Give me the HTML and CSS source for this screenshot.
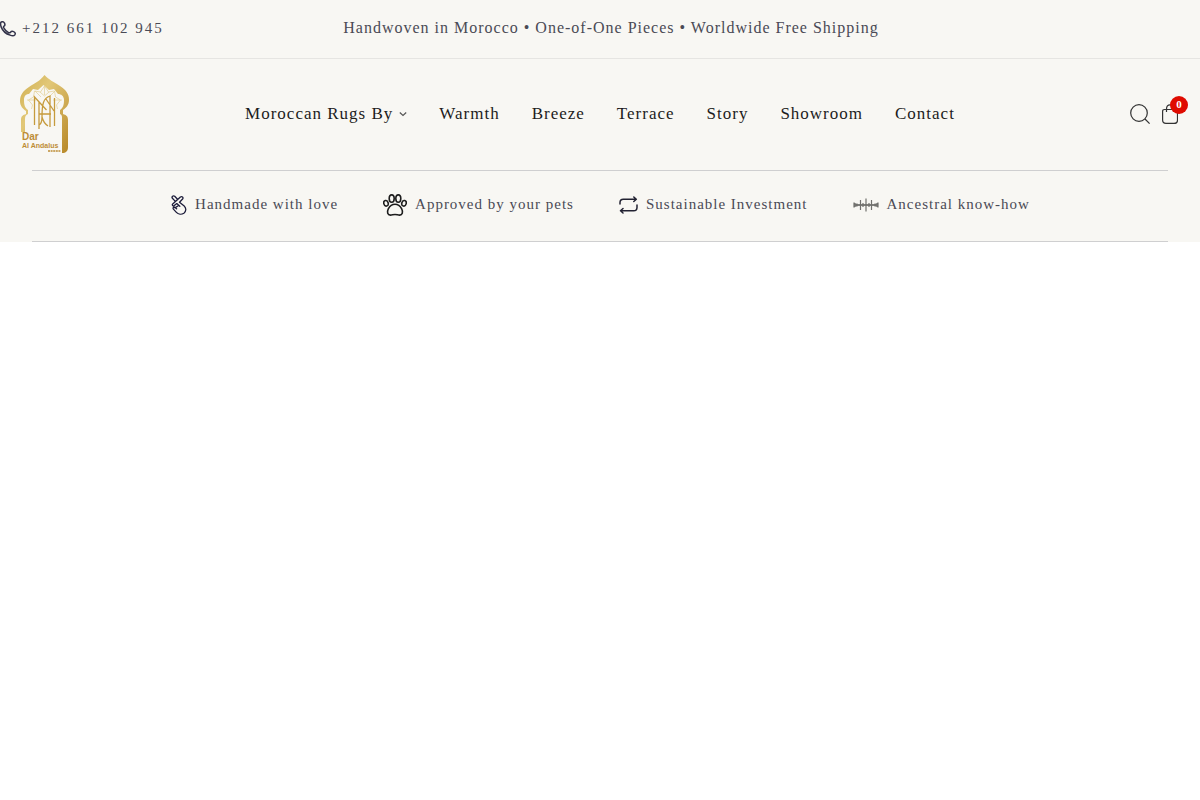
FILE: index.html
```html
<!DOCTYPE html>
<html lang="en">
<head>
<meta charset="utf-8">
<meta name="viewport" content="width=device-width, initial-scale=1">
<title>Dar Al Andalus</title>
<link rel="stylesheet" href="styles.css">
</head>
<body>
<header class="site-header">
  <div class="topbar">
    <a class="phone" href="tel:+212661102945">
      <svg width="16" height="16" viewBox="0 0 16 16" fill="none" stroke="currentColor" stroke-width="1.5" stroke-linejoin="round" aria-hidden="true"><path d="M1 1.200C2.200.3 3.800.6 4.500 2.200c.8 1.500.6 2.200-.5 3-.8.5-.7 1 .1 2.200 1 1.700 2.300 3 4.100 4 1.200.7 1.700.6 2.300-.2.900-1.100 1.700-1.200 3.100-.6 1.900 1 2 2.300 1.100 3.400-.8.9-2.700.9-4.600.1C5.500 12.800 2.600 9.700 1.100 5.900.5 3.700.3 2 1 1.200Z"/></svg>
      <span class="phone-number">+212 661 102 945</span>
    </a>
    <p class="announcement">Handwoven in Morocco • One-of-One Pieces • Worldwide Free Shipping</p>
  </div>

  <div class="main-row">
    <a class="logo" href="/" aria-label="Dar Al Andalus">
      <svg width="50" height="80" viewBox="0 -1 50 80" aria-hidden="true">
        <defs><linearGradient id="gold" x1="0" y1="0" x2="1" y2="1"><stop offset="0" stop-color="#cfae50"/><stop offset=".35" stop-color="#e2c878"/><stop offset="1" stop-color="#b78726"/></linearGradient></defs>
        <path fill="url(#gold)" fill-rule="evenodd" d="M24.500 0C29 5 34 7 40 11c6 4 9 8 9 14 0 5-3 8-6 10v4c3 1 5 2 5 6v27c0 4-2 6-6 6V44c0-3 0-4-2-5v-4c3-2 4-5 4-10 0-4-3-6-6-6l-4-5-5 1-5.500-5-5.500 5-5-1-4 5c-3 0-5 2-5 6 0 5 1 8 4 10v4c-2 1-3 2-3 5v13H1V45c0-4 2-5 5-6v-3c-3-2-6-5-6-10 0-6 3-10 9-14 6-4 11-6 15.500-12Z"/>
        <g fill="none" stroke="#e3cf93" stroke-width=".7"><path d="M24.500 11l4 6 6-1 1 6 5 3-4 5 1 4M24.500 11l-4 6-6-1-1 6-5 3 4 5-1 4M24.500 11v9M15 16l6 6M35 16l-6 6M7 25h9M42 25h-9M20 17l4.500 4 4.500-4"/></g>
        <g fill="none" stroke="#c69b3d" stroke-width="1.300"><path d="M14.500 50V22l12 13M19 54V27M19 50c2-1 3-3 3-8 0-12 1-19 8-21v31M34.500 51V23M19 39h12M22 42c1 4 3 7 6 9M26 24l8 12"/></g>
        <text class="logo-name" x="2" y="65">Dar</text>
        <text class="logo-place" x="2" y="73">Al Andalus</text>
        <path d="M28 76h13" stroke="#bd8d36" stroke-width="1.300" stroke-dasharray="2 .6"/>
      </svg>
    </a>
    <nav class="nav" aria-label="Main">
      <a class="nav-parent" href="#rugs">Moroccan Rugs By
        <svg width="8" height="8" viewBox="0 0 8 8" fill="none" stroke="currentColor" stroke-width="1.200" aria-hidden="true"><path d="M.8 2.500 4 5.500l3.200-3"/></svg></a>
      <a href="#warmth">Warmth</a>
      <a href="#breeze">Breeze</a>
      <a href="#terrace">Terrace</a>
      <a href="#story">Story</a>
      <a href="#showroom">Showroom</a>
      <a href="#contact">Contact</a>
    </nav>
    <div class="actions">
      <button class="icon-button" type="button" aria-label="Search">
        <svg width="20" height="20" viewBox="0 0 20 20" fill="none" stroke="currentColor" stroke-width="1.200" aria-hidden="true"><circle cx="9" cy="9" r="8.300"/><path d="m15 15 4.600 4.600"/></svg>
      </button>
      <a class="icon-button cart" href="/cart" aria-label="Cart, 0 items">
        <svg width="16" height="20" viewBox="0 0 16 20" fill="none" stroke="currentColor" stroke-width="1.200" aria-hidden="true"><path d="M2.500 5.500h11c1.300 0 2 .6 2 2V16c0 2.300-1.200 3.400-3.500 3.400H4C1.700 19.400.6 18.300.6 16V7.500c0-1.400.6-2 1.900-2ZM4.500 8V5C4.500 2.500 5.800.8 8 .8S11.500 2.500 11.500 5v3"/></svg>
        <span class="badge">0</span>
      </a>
    </div>
  </div>

  <ul class="benefits">
    <li class="benefit">
      <svg width="17" height="20" viewBox="0 0 17 20" fill="none" stroke="#1c1c3a" stroke-width="1.300" stroke-linecap="round" stroke-linejoin="round" aria-hidden="true"><path d="M7.500 4.300 4.700 1.300C3.200.2 1.300 1.800 2.400 3.300l2.900 3.100M2.700 8.900l7.700-6.900c1.600-1.100 3.300.6 2.200 2L9.500 7.300l4.700 3.700c2.300 2.300 2 5.500-.3 7.200-2.400 1.600-5.600 1.300-7.500-.8l-3-3.300c-.9-1.300.5-2.500 1.700-1.500l1.500 1.200M2.700 8.900c-1 1.200.3 2.500 1.600 1.700l2.500-2M4.300 10.600c-1 1.100-.1 2.400 1.100 2l2.800-1.900M6.800 8.600l3 2.600"/></svg>
      <span>Handmade with love</span>
    </li>
    <li class="benefit">
      <svg width="24" height="22" viewBox="0 0 24 22" fill="none" stroke="#1d1d1d" stroke-width="1.600" aria-hidden="true"><ellipse cx="8.700" cy="4.600" rx="2.500" ry="3.700"/><ellipse cx="15.300" cy="4.600" rx="2.500" ry="3.700"/><ellipse cx="3" cy="9.300" rx="2.200" ry="2.800" transform="rotate(-15 3 9.300)"/><ellipse cx="21" cy="9.300" rx="2.200" ry="2.800" transform="rotate(15 21 9.300)"/><path d="M12 10.200c3.500 0 5.300 2 6.700 4.600 1.700 3.300.6 6.400-2.200 6.300-1.500 0-2.700-.6-4.500-.6s-3 .6-4.500.6c-2.800.1-3.900-3-2.200-6.300 1.400-2.600 3.200-4.600 6.700-4.600Z"/></svg>
      <span>Approved by your pets</span>
    </li>
    <li class="benefit">
      <svg width="19" height="18" viewBox="0 0 19 18" fill="none" stroke="#222232" stroke-width="1.500" stroke-linecap="round" stroke-linejoin="round" aria-hidden="true"><path d="M1 8V6.500c0-2 1.200-3.300 3.300-3.300H17M14.800 1l2.500 2.200-2.500 2.300M18 9v2.500c0 2-1.200 3.300-3.300 3.300H1.500M4 12.500l-2.500 2.300L4 17"/></svg>
      <span>Sustainable Investment</span>
    </li>
    <li class="benefit">
      <svg width="26" height="14" viewBox="0 0 26 14" fill="none" stroke="#70706d" stroke-width="1.200" aria-hidden="true"><path d="M1 7h24" stroke-width="1.800"/><path d="M1 4.500v5M4 5.500v3M7.500 2v10M10 5v4M13 .5v13M16 5v4M18.500 2v10M22 5.500v3M25 4.500v5M1 5l3 2-3 2M25 5l-3 2 3 2"/></svg>
      <span>Ancestral know-how</span>
    </li>
  </ul>
</header>
</body>
</html>
```
FILE: styles.css
```css
* {
  box-sizing: border-box;
}

body {
  margin: 0;
  background: #fff;
  color: #1c1c1c;
  font-family: "Liberation Serif", "Times New Roman", serif;
  font-size: 16px;
  line-height: 24px;
  letter-spacing: 1px;
}

a {
  color: inherit;
  text-decoration: none;
}

svg {
  display: block;
  flex: none;
}

.site-header {
  background: #f8f7f3;
}

.topbar {
  display: grid;
  grid-template-columns: 1fr auto 1fr;
  align-items: center;
  padding: 16px 0 18px;
  border-bottom: 1px solid #e6e5e2;
  color: #4a4a55;
}

.phone {
  display: flex;
  align-items: center;
  gap: 6px;
}

.phone svg {
  color: #33334a;
  margin-top: 2px;
}

.phone-number {
  font-size: 15px;
  letter-spacing: 2px;
}

.announcement {
  margin: 0;
  padding-left: 22px;
}

.main-row {
  display: grid;
  grid-template-columns: 1fr auto 1fr;
  align-items: center;
  padding: 15px 20px 16px;
}

.logo {
  justify-self: start;
}

.logo-name {
  fill: #bd8d36;
  font: bold 10px "Liberation Sans", Arial, sans-serif;
  letter-spacing: 0;
}

.logo-place {
  fill: #bd8d36;
  font: bold 7px "Liberation Sans", Arial, sans-serif;
  letter-spacing: 0;
}

.nav {
  display: flex;
  gap: 32px;
  font-size: 17px;
}

.nav-parent {
  display: flex;
  align-items: center;
  gap: 6px;
}

.nav-parent svg {
  color: #555;
}

.actions {
  display: flex;
  justify-self: end;
  align-items: center;
  gap: 12px;
  color: #333;
}

.icon-button {
  display: block;
  padding: 0;
  border: 0;
  background: none;
  color: inherit;
}

.cart {
  position: relative;
  margin-right: 2px;
}

.badge {
  position: absolute;
  top: -8px;
  right: -10px;
  width: 18px;
  height: 18px;
  border-radius: 50%;
  background: #df0b00;
  color: #fff;
  font-size: 11px;
  font-weight: bold;
  line-height: 17px;
  letter-spacing: 0;
  text-align: center;
}

.benefits {
  display: flex;
  flex-wrap: wrap;
  justify-content: center;
  gap: 8px 45px;
  margin: 0 32px;
  padding: 21px 0 25px;
  border-top: 1px solid #cfcfd0;
  border-bottom: 1px solid #cfcfd0;
  list-style: none;
  color: #4a4a55;
  font-size: 15px;
}

.benefit {
  display: flex;
  align-items: center;
  gap: 8px;
}

.benefit svg {
  margin-top: 2px;
}
```
